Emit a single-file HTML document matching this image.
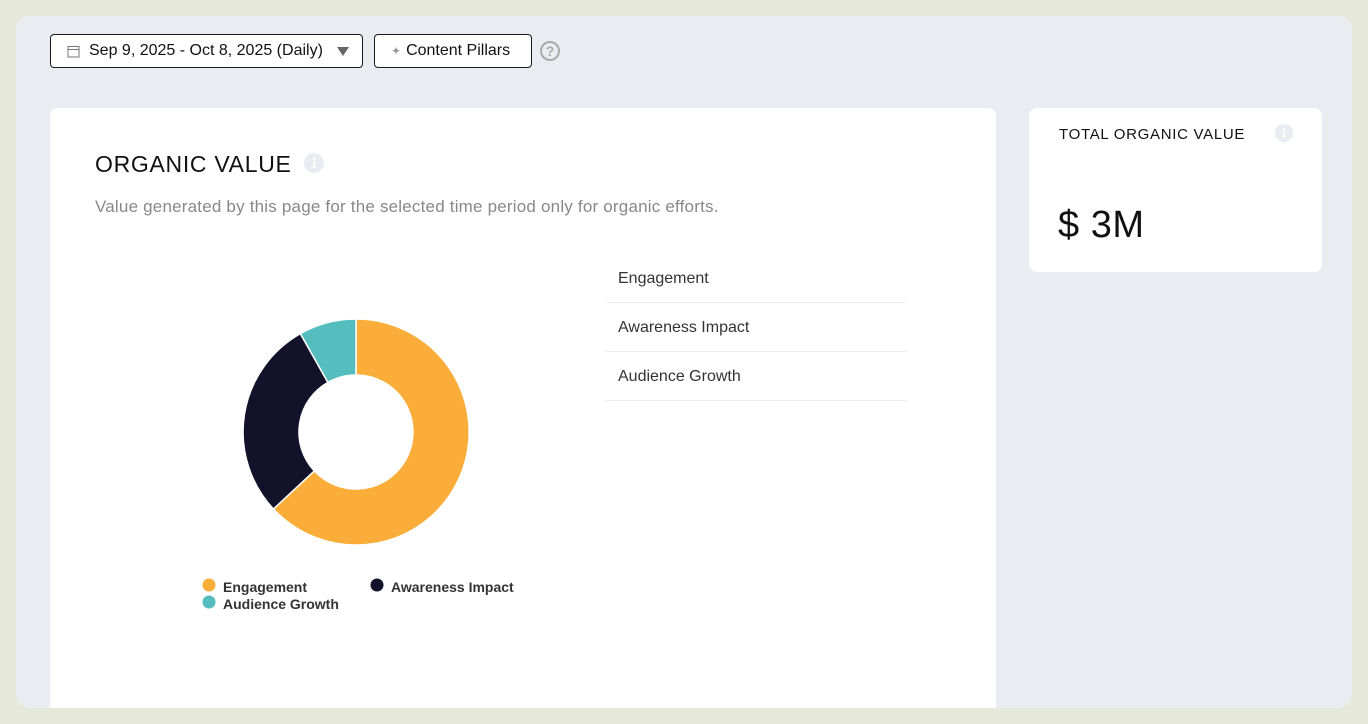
<!DOCTYPE html>
<html><head><style>
*{margin:0;padding:0;box-sizing:border-box}
body{width:1368px;height:724px;background:#e6e8da;font-family:"Liberation Sans",sans-serif;overflow:hidden}
.frame{position:absolute;left:16px;top:16px;width:1336px;height:692px;background:#e9ecf1;border-radius:14px;overflow:hidden}
.btn{position:absolute;top:18px;height:34px;border:1px solid #1a1a1a;border-radius:4px;background:#fff;font-size:16px;color:#111;display:flex;align-items:center}
.card{position:absolute;background:#fff;border-radius:8px}
.row{position:absolute;left:556px;width:300px;height:49px;border-bottom:1px solid #ececec;font-size:16px;color:#333;padding-left:12px;line-height:49px}
</style></head><body>
<div class="frame">
 <div class="btn" style="left:34px;width:313px;padding-left:16px">
  <svg width="13" height="13" viewBox="0 0 13 13" style="margin-right:9px"><rect x="1" y="1.5" width="11" height="10.5" fill="none" stroke="#777" stroke-width="1"/><line x1="1" y1="4.5" x2="12" y2="4.5" stroke="#777"/></svg>
  Sep 9, 2025 - Oct 8, 2025 (Daily)
  <svg width="12" height="10" viewBox="0 0 12 10" style="margin-left:14px"><path d="M0 1h12L6 10z" fill="#666"/></svg>
 </div>
 <div class="btn" style="left:358px;width:158px;padding-left:16px">
  <span style="color:#999;font-size:12px;margin-right:5px">✦</span>Content Pillars
 </div>
 <svg style="position:absolute;left:523px;top:24px" width="22" height="22" viewBox="0 0 22 22"><circle cx="11" cy="11" r="9" fill="none" stroke="#aaa" stroke-width="2"/><text x="11" y="16" text-anchor="middle" font-size="14" font-weight="bold" fill="#aaa" font-family="Liberation Sans">?</text></svg>

 <div class="card" style="left:34px;top:92px;width:946px;height:620px">
  <div style="position:absolute;left:45px;top:43px;font-size:23px;color:#111;letter-spacing:0.7px">ORGANIC VALUE</div>
  <svg style="position:absolute;left:254px;top:45px" width="20" height="20"><circle cx="10" cy="10" r="10" fill="#e9ecf1"/><rect x="9" y="9" width="2.5" height="6" fill="#fff"/><circle cx="10.2" cy="6" r="1.5" fill="#fff"/></svg>
  <div style="position:absolute;left:45px;top:89px;font-size:17px;color:#888;letter-spacing:0.2px">Value generated by this page for the selected time period only for organic efforts.</div>
  <div class="row" style="top:146px">Engagement</div>
  <div class="row" style="top:195px">Awareness Impact</div>
  <div class="row" style="top:244px">Audience Growth</div>
 </div>
 <svg style="position:absolute;left:0;top:0" width="1336" height="692" viewBox="16 16 1336 692">
  <path d="M356 319 A113 113 0 1 1 273.4 509 L314.3 470.9 A57 57 0 1 0 356 375Z" fill="#fbad3a" stroke="#fff" stroke-width="1.5"/>
  <path d="M273.4 509 A113 113 0 0 1 300.4 333.6 L327.9 382.4 A57 57 0 0 0 314.3 470.9Z" fill="#14122b" stroke="#fff" stroke-width="1.5"/>
  <path d="M300.4 333.6 A113 113 0 0 1 356 319 L356 375 A57 57 0 0 0 327.9 382.4Z" fill="#56bdbf" stroke="#fff" stroke-width="1.5"/>
  <circle cx="209" cy="585" r="6.5" fill="#fbad3a"/>
  <circle cx="209" cy="602" r="6.5" fill="#56bdbf"/>
  <circle cx="377" cy="585" r="6.5" fill="#14122b"/>
  <g font-family="Liberation Sans" font-weight="bold" font-size="14" fill="#333">
   <text x="223" y="592">Engagement</text>
   <text x="223" y="609">Audience Growth</text>
   <text x="391" y="592">Awareness Impact</text>
  </g>
 </svg>

 <div class="card" style="left:1013px;top:92px;width:293px;height:164px">
  <div style="position:absolute;left:30px;top:18px;font-size:15px;color:#111;letter-spacing:0.7px">TOTAL ORGANIC VALUE</div>
  <svg style="position:absolute;left:246px;top:16px" width="18" height="18"><circle cx="9" cy="9" r="9" fill="#e9ecf1"/><rect x="8" y="8" width="2.2" height="5.5" fill="#fff"/><circle cx="9.1" cy="5.3" r="1.3" fill="#fff"/></svg>
  <div style="position:absolute;left:29px;top:96px;font-size:38px;color:#111;letter-spacing:0.5px">$ 3M</div>
 </div>
</div>
</body></html>
